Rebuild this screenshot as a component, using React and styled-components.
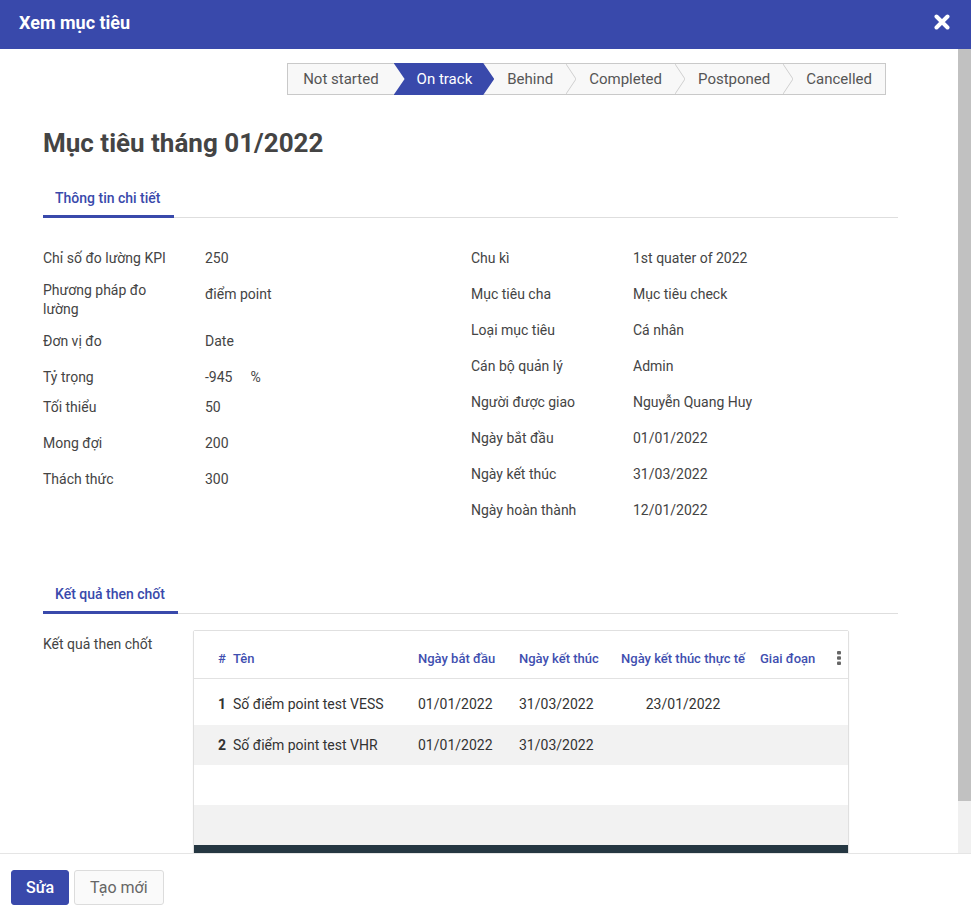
import React from "react";
import styled, { createGlobalStyle } from "styled-components";

const GlobalStyle = createGlobalStyle`
    html, body {
        margin: 0;
        padding: 0;
        height: 100%;
    }
    body {
        font-family: Roboto, "Noto Sans", "Liberation Sans", sans-serif;
        color: #444;
        background: #fff;
    }
    #root {
        height: 100%;
    }
`

// Dialog shell

const Dialog = styled.div`
    height: 100vh;
    display: flex;
    flex-flow: column nowrap;
    background: #fff;
`
const Header = styled.header`
    height: 49px;
    flex: none;
    box-sizing: border-box;
    background-color: #3949ab;
    display: flex;
    align-items: center;
    justify-content: space-between;
    padding: 0 21px 5px 19px;
`
const HeaderTitle = styled.h1`
    margin: 0;
    font-size: 18px;
    font-weight: 700;
    color: #fff;
`
const CloseButton = styled.button`
    border: none;
    background: none;
    padding: 0;
    width: 16px;
    height: 16px;
    display: flex;
    cursor: pointer;
`
const Body = styled.main`
    flex: 1;
    min-height: 0;
    display: flex;
`
const ScrollArea = styled.div`
    flex: 1;
    overflow: hidden;
`
// drawn scrollbar (the headless browser hides native ones)
const ScrollTrack = styled.div`
    width: 13px;
    flex: none;
    background: #f0f0f0;
`
const ScrollThumb = styled.div`
    background: #c1c1c1;
`
const Content = styled.div`
    padding: 14px 60px 35px 43px;
`
//~~~~~~~~~~~~~~~~~~~~~~~~~~~

// Status bar

const StageRow = styled.div`
    display: flex;
    justify-content: flex-end;
    padding-right: 12px;
`
const StageBar = styled.div`
    display: flex;
    height: 32px;
    box-sizing: border-box;
    border: 1px solid #c9c9c9;
    background: #f8f8f8;
`
const Stage = styled.div`
    display: flex;
    align-items: center;
    font-size: 15px;
    color: ${p => (p.active ? "#fff" : "#555")};
    background: ${p => (p.active ? "#3949ab" : "transparent")};
    padding: ${p => (p.active ? "0 22px 0 23px" : p.first ? "0 15px 0 15px" : "0 13px 0 13px")};
    clip-path: ${p => (p.active ? "polygon(0 0, calc(100% - 11px) 0, 100% 50%, calc(100% - 11px) 100%, 0 100%, 11px 50%)" : "none")};
    margin: ${p => (p.active ? "-1px 0" : "0")};
`
const Chevron = styled.svg`
    width: 10px;
    height: 30px;
    flex: none;
`
//~~~~~~~~~~~~~~~~~~~~~~~~~~~

// Title and tabs

const Title = styled.h2`
    margin: 32px 0 19px;
    font-size: 26px;
    line-height: 32px;
    font-weight: 700;
    color: #444;
`
const TabList = styled.div`
    display: flex;
    border-bottom: 1px solid #dedede;
    margin-top: ${p => p.top || 0}px;
`
const Tab = styled.div`
    padding: 10px 13px 7px 12px;
    font-size: 14px;
    line-height: 20px;
    font-weight: 500;
    color: #3949ab;
    border-bottom: 3px solid #3949ab;
    margin-bottom: -1px;
`
//~~~~~~~~~~~~~~~~~~~~~~~~~~~

// Detail fields

const FieldGrid = styled.div`
    display: grid;
    grid-template-columns: 428px 1fr;
    margin-top: 22px;
`
const FieldColumn = styled.div`
    display: flex;
    flex-flow: column nowrap;
`
const Field = styled.div`
    display: flex;
    box-sizing: border-box;
    min-height: ${p => p.h || 36}px;
    padding-top: 8px;
    font-size: 14px;
    line-height: 20px;
`
const Label = styled.div`
    width: ${p => p.w || 162}px;
    flex: none;
    color: #444;
    padding-right: 20px;
    box-sizing: border-box;
    line-height: ${p => p.lh || 20}px;
    margin-top: ${p => p.mt || 0}px;
`
const Value = styled.div`
    color: #444;
`
const Unit = styled.span`
    margin-left: 18px;
`
//~~~~~~~~~~~~~~~~~~~~~~~~~~~

// Key results table

const ResultSection = styled.div`
    display: flex;
    margin-top: 16px;
`
const ResultLabel = styled.div`
    width: 150px;
    flex: none;
    font-size: 14px;
    line-height: 20px;
    padding-top: 4px;
    color: #444;
`
const Card = styled.div`
    width: 656px;
    box-sizing: border-box;
    border: 1px solid #e0e0e0;
    border-radius: 2px;
    box-shadow: 0 1px 2px rgba(0, 0, 0, 0.06);
`
const TableRow = styled.div`
    display: grid;
    grid-template-columns: 15px 185px 101px 102px 139px 77px 1fr;
    align-items: center;
    box-sizing: border-box;
    padding-left: 24px;
    height: ${p => p.h || 40}px;
    background: ${p => (p.shaded ? "#f2f2f2" : "#fff")};
    border-bottom: ${p => (p.head ? "1px solid #e2e2e2" : "none")};
    padding-top: ${p => p.pt || 0}px;
`
const HeadCell = styled.div`
    font-size: 13px;
    font-weight: 500;
    color: #3f4fb0;
    white-space: nowrap;
    text-align: ${p => (p.center ? "center" : "left")};
    padding-right: ${p => (p.center ? "15px" : "0")};
`
const Cell = styled.div`
    font-size: 14px;
    color: #333;
    white-space: nowrap;
    font-weight: ${p => (p.bold ? 700 : 400)};
    text-align: ${p => (p.center ? "center" : "left")};
    padding-right: ${p => (p.center ? "15px" : "0")};
`
const TableFooter = styled.div`
    height: 30px;
    background: #253742;
`
const Kebab = styled.svg`
    width: 4px;
    height: 14px;
    display: block;
`
//~~~~~~~~~~~~~~~~~~~~~~~~~~~

// Footer

const Footer = styled.footer`
    flex: none;
    height: 66px;
    box-sizing: border-box;
    border-top: 1px solid #e5e5e5;
    padding: 16px 11px 0;
    display: flex;
    gap: 5px;
    align-items: flex-start;
`
const Button = styled.button`
    height: 35px;
    padding: 0 ${p => (p.primary ? 14 : 15)}px;
    border-radius: 3px;
    font-family: inherit;
    font-size: 16px;
    font-weight: ${p => (p.primary ? 500 : 400)};
    color: ${p => (p.primary ? "#fff" : "#666")};
    background: ${p => (p.primary ? "#3949ab" : "#fafafa")};
    border: 1px solid ${p => (p.primary ? "#3949ab" : "#dcdcdc")};
    cursor: pointer;
`

const stages = ["Not started", "On track", "Behind", "Completed", "Postponed", "Cancelled"]

const leftFields = [
    { label: "Chỉ số đo lường KPI", value: "250" },
    { label: "Phương pháp đo lường", value: "điểm point", h: 47, lh: 19, mt: -3 },
    { label: "Đơn vị đo", value: "Date" },
    { label: "Tỷ trọng", value: "-945", unit: "%", h: 30 },
    { label: "Tối thiểu", value: "50" },
    { label: "Mong đợi", value: "200" },
    { label: "Thách thức", value: "300" },
]

const rightFields = [
    { label: "Chu kì", value: "1st quater of 2022" },
    { label: "Mục tiêu cha", value: "Mục tiêu check" },
    { label: "Loại mục tiêu", value: "Cá nhân" },
    { label: "Cán bộ quản lý", value: "Admin" },
    { label: "Người được giao", value: "Nguyễn Quang Huy" },
    { label: "Ngày bắt đầu", value: "01/01/2022" },
    { label: "Ngày kết thúc", value: "31/03/2022" },
    { label: "Ngày hoàn thành", value: "12/01/2022" },
]

const results = [
    { no: 1, name: "Số điểm point test VESS", start: "01/01/2022", end: "31/03/2022", actual: "23/01/2022" },
    { no: 2, name: "Số điểm point test VHR", start: "01/01/2022", end: "31/03/2022", actual: "" },
]

function StatusBar({ current }) {
    const items = []
    stages.forEach((s, i) => {
        const prev = i > 0 && stages[i - 1]
        if (i > 0 && s !== current && prev !== current) {
            items.push(
                <Chevron key={"c" + i} viewBox="0 0 10 30">
                    <polyline points="0,0 10,15 0,30" fill="none" stroke="#d0d0d0" strokeWidth="1" />
                </Chevron>
            )
        }
        items.push(
            <Stage key={s} active={s === current} first={i === 0}>
                {s}
            </Stage>
        )
    })
    return (
        <StageRow>
            <StageBar>{items}</StageBar>
        </StageRow>
    )
}

function FieldList({ fields }) {
    return (
        <FieldColumn>
            {fields.map(f => (
                <Field key={f.label} h={f.h}>
                    <Label lh={f.lh} mt={f.mt}>{f.label}</Label>
                    <Value>
                        {f.value}
                        {f.unit && <Unit>{f.unit}</Unit>}
                    </Value>
                </Field>
            ))}
        </FieldColumn>
    )
}

function ResultsTable() {
    return (
        <Card>
            <TableRow head h={48} pt={7}>
                <HeadCell>#</HeadCell>
                <HeadCell>Tên</HeadCell>
                <HeadCell>Ngày bắt đầu</HeadCell>
                <HeadCell>Ngày kết thúc</HeadCell>
                <HeadCell center>Ngày kết thúc thực tế</HeadCell>
                <HeadCell>Giai đoạn</HeadCell>
                <Kebab viewBox="0 0 4 14">
                    <rect x="0" y="0" width="4" height="3.4" rx="1" fill="#666" />
                    <rect x="0" y="5.3" width="4" height="3.4" rx="1" fill="#666" />
                    <rect x="0" y="10.6" width="4" height="3.4" rx="1" fill="#666" />
                </Kebab>
            </TableRow>
            {results.map((r, i) => (
                <TableRow key={r.no} shaded={i % 2 === 1} h={i === 0 ? 46 : 40} pt={i === 0 ? 4 : 0}>
                    <Cell bold>{r.no}</Cell>
                    <Cell>{r.name}</Cell>
                    <Cell>{r.start}</Cell>
                    <Cell>{r.end}</Cell>
                    <Cell center>{r.actual}</Cell>
                    <Cell />
                    <Cell />
                </TableRow>
            ))}
            <TableRow />
            <TableRow shaded />
            <TableFooter />
        </Card>
    )
}

function App() {
    return (
        <>
            <GlobalStyle />
            <Dialog>
                <Header>
                    <HeaderTitle>Xem mục tiêu</HeaderTitle>
                    <CloseButton aria-label="Đóng">
                        <svg width="16" height="16" viewBox="0 0 16 16">
                            <path d="M2.5 2.5 L13.5 13.5 M13.5 2.5 L2.5 13.5" stroke="#fff" strokeWidth="4" strokeLinecap="round" />
                        </svg>
                    </CloseButton>
                </Header>
                <Body>
                    <ScrollArea>
                        <Content>
                            <StatusBar current="On track" />
                            <Title>Mục tiêu tháng 01/2022</Title>
                            <TabList>
                                <Tab>Thông tin chi tiết</Tab>
                            </TabList>
                            <FieldGrid>
                                <FieldList fields={leftFields} />
                                <FieldList fields={rightFields} />
                            </FieldGrid>
                            <TabList top={46}>
                                <Tab>Kết quả then chốt</Tab>
                            </TabList>
                            <ResultSection>
                                <ResultLabel>Kết quả then chốt</ResultLabel>
                                <ResultsTable />
                            </ResultSection>
                        </Content>
                    </ScrollArea>
                    <ScrollTrack>
                        <ScrollThumb style={{ height: "93.5%" }} />
                    </ScrollTrack>
                </Body>
                <Footer>
                    <Button primary>Sửa</Button>
                    <Button>Tạo mới</Button>
                </Footer>
            </Dialog>
        </>
    )
}

export default App
